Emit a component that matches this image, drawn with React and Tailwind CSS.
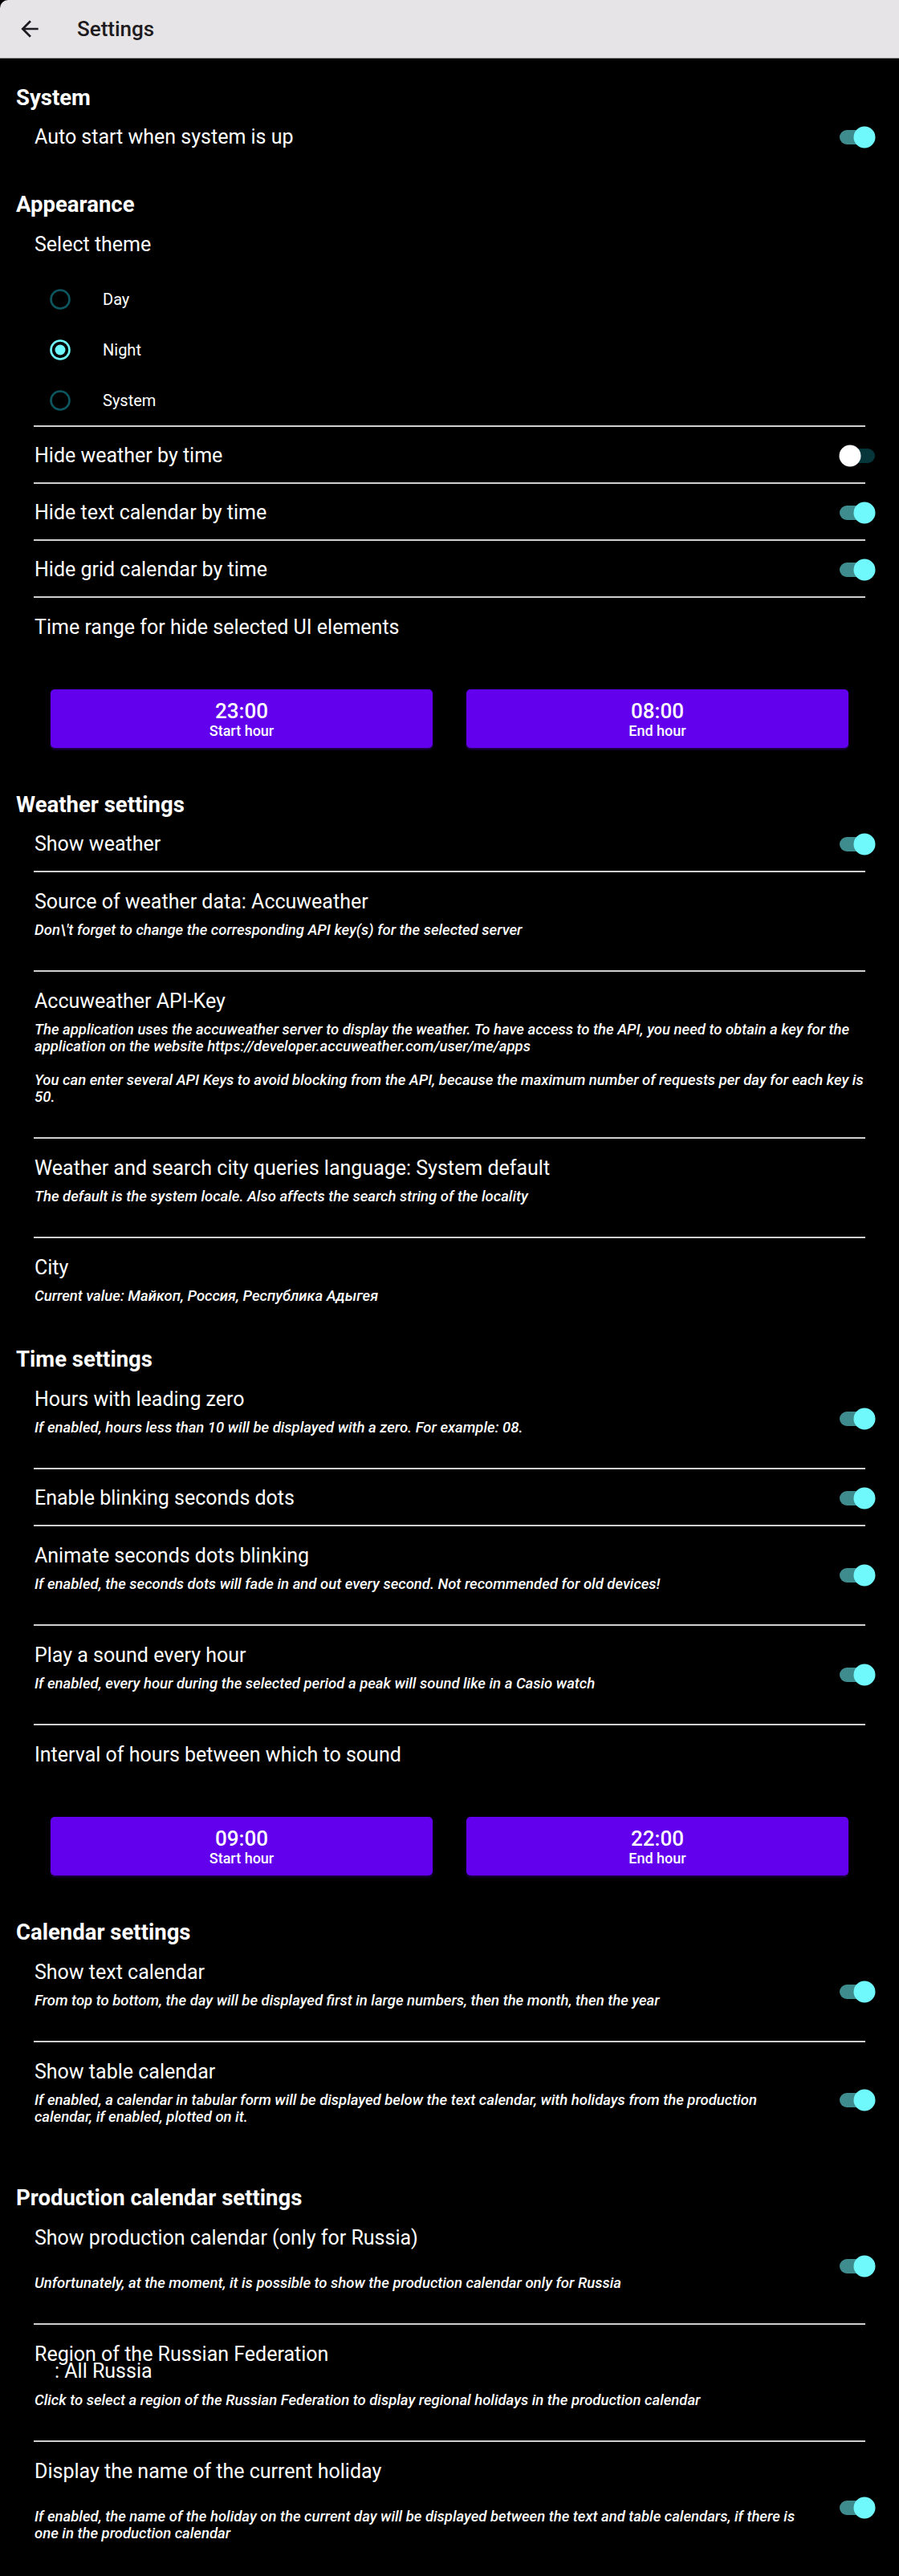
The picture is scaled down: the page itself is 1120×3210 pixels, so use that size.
import React from 'react';

const Toggle = ({ on }) => (
    <svg width="46" height="28" viewBox="0 0 46 28" className="shrink-0 ml-[44px] -mr-[13px]">
        <rect x="1" y="5" width="44" height="18" rx="9" fill={on ? '#3f8c8e' : '#06363a'} />
        <circle cx={on ? 32 : 14} cy="14" r="13.5" fill={on ? '#6ff9fd' : '#ffffff'} />
    </svg>
);

const Radio = ({ checked }) => (
    <svg width="28" height="28" viewBox="0 0 28 28" className="shrink-0">
        <circle cx="14" cy="14" r="11.5" fill="none" stroke={checked ? '#6ff9fd' : '#0d5660'} strokeWidth="2.6" />
        {checked && <circle cx="14" cy="14" r="6.5" fill="#6ff9fd" />}
    </svg>
);

const Category = ({ children }) => (
    <div className="h-[62px] pt-[35px] pl-[20px] text-[27.5px] leading-[28px] font-bold text-white">
        {children}
    </div>
);

const Pref = ({ title, title2, summary, toggle, divider = true, pb = 'pb-[39px]' }) => (
    <div className="px-[42px]">
        <div
            className={`flex items-center border-b-2 ${divider ? 'border-[#d0d0d0]' : 'border-transparent'} ${summary ? '' : 'h-[71px] pt-[2px]'}`}
        >
            <div className={`flex-1 min-w-0 pl-px ${summary ? `pt-[22px] ${pb}` : ''}`}>
                <div className="text-[25px] leading-[30px] text-white">{title}</div>
                {title2 && <div className="text-[25px] leading-[12px] pl-[25px] text-white">{title2}</div>}
                {summary && (
                    <p
                        className={`${title2 ? 'mt-[20px]' : 'mt-[10px]'} text-[18.5px] leading-[21px] italic font-medium text-white whitespace-pre-line`}
                    >
                        {summary}
                    </p>
                )}
            </div>
            {toggle !== undefined && <Toggle on={toggle} />}
        </div>
    </div>
);

const HourButtons = ({ start, end }) => (
    <div className="grid grid-cols-2 gap-[42px] px-[21px] mt-[62px]">
        {[
            [start, 'Start hour'],
            [end, 'End hour'],
        ].map(([time, label]) => (
            <button
                key={label}
                className="h-[73px] rounded-[5px] bg-[#6200ee] shadow-[0_2px_3px_rgba(98,0,238,0.35)] flex flex-col items-center justify-center text-white"
            >
                <span className="text-[26px] leading-[30px] font-medium">{time}</span>
                <span className="text-[18px] leading-[20px] font-medium">{label}</span>
            </button>
        ))}
    </div>
);

const TimeRange = ({ title, start, end }) => (
    <div className="px-[42px] pt-[22px] pb-[22px]">
        <div className="pl-px text-[25px] leading-[30px] text-white">{title}</div>
        <HourButtons start={start} end={end} />
    </div>
);

const ThemeSelect = () => (
    <div className="px-[42px]">
        <div className="border-b-2 border-[#d0d0d0] pt-[22px]">
            <div className="pl-px text-[25px] leading-[30px] text-white">Select theme</div>
            <div className="mt-[21px]">
                {['Day', 'Night', 'System'].map((name) => (
                    <div key={name} className="h-[63px] flex items-center pl-[19px]">
                        <Radio checked={name === 'Night'} />
                        <span className="ml-[39px] text-[20px] text-white">{name}</span>
                    </div>
                ))}
            </div>
        </div>
    </div>
);

const Header = () => (
    <div className="h-[73px] bg-[#e6e4e6] rounded-tl-[10px] flex items-center border-b border-[#8a8a8a]">
        <svg width="32" height="32" viewBox="0 0 24 24" className="ml-[21px]">
            <path d="M20 11H7.83l5.59-5.59L12 4l-8 8 8 8 1.41-1.41L7.83 13H20v-2z" fill="#1d1b20" />
        </svg>
        <span className="ml-[43px] text-[26px] font-medium text-[#1d1b20]">Settings</span>
    </div>
);

const App = () => {
    return (
        <div className="w-[1120px] min-h-screen bg-black font-['Roboto',sans-serif]">
            <Header />

            <Category>System</Category>
            <Pref title="Auto start when system is up" toggle={true} divider={false} />

            <Category>Appearance</Category>
            <ThemeSelect />
            <Pref title="Hide weather by time" toggle={false} />
            <Pref title="Hide text calendar by time" toggle={true} />
            <Pref title="Hide grid calendar by time" toggle={true} />
            <TimeRange title="Time range for hide selected UI elements" start="23:00" end="08:00" />

            <Category>Weather settings</Category>
            <Pref title="Show weather" toggle={true} />
            <Pref
                title="Source of weather data: Accuweather"
                summary={"Don\\'t forget to change the corresponding API key(s) for the selected server"}
            />
            <Pref
                title="Accuweather API-Key"
                summary={
                    'The application uses the accuweather server to display the weather. To have access to the API, you need to obtain a key for the application on the website https://developer.accuweather.com/user/me/apps\n\nYou can enter several API Keys to avoid blocking from the API, because the maximum number of requests per day for each key is 50.'
                }
            />
            <Pref
                title="Weather and search city queries language: System default"
                summary="The default is the system locale. Also affects the search string of the locality"
            />
            <Pref
                title="City"
                summary="Current value: Майкоп, Россия, Республика Адыгея"
                divider={false}
                pb="pb-[17px]"
            />

            <Category>Time settings</Category>
            <Pref
                title="Hours with leading zero"
                summary="If enabled, hours less than 10 will be displayed with a zero. For example: 08."
                toggle={true}
            />
            <Pref title="Enable blinking seconds dots" toggle={true} />
            <Pref
                title="Animate seconds dots blinking"
                summary="If enabled, the seconds dots will fade in and out every second. Not recommended for old devices!"
                toggle={true}
            />
            <Pref
                title="Play a sound every hour"
                summary="If enabled, every hour during the selected period a peak will sound like in a Casio watch"
                toggle={true}
            />
            <TimeRange title="Interval of hours between which to sound" start="09:00" end="22:00" />

            <Category>Calendar settings</Category>
            <Pref
                title="Show text calendar"
                summary="From top to bottom, the day will be displayed first in large numbers, then the month, then the year"
                toggle={true}
            />
            <Pref
                title="Show table calendar"
                summary="If enabled, a calendar in tabular form will be displayed below the text calendar, with holidays from the production calendar, if enabled, plotted on it."
                toggle={true}
                divider={false}
            />

            <Category>Production calendar settings</Category>
            <Pref
                title="Show production calendar (only for Russia)"
                summary={'\nUnfortunately, at the moment, it is possible to show the production calendar only for Russia'}
                toggle={true}
            />
            <Pref
                title="Region of the Russian Federation"
                title2=": All Russia"
                summary="Click to select a region of the Russian Federation to display regional holidays in the production calendar"
            />
            <Pref
                title="Display the name of the current holiday"
                summary={
                    '\nIf enabled, the name of the holiday on the current day will be displayed between the text and table calendars, if there is one in the production calendar'
                }
                toggle={true}
                divider={false}
            />
        </div>
    );
};

export default App;
